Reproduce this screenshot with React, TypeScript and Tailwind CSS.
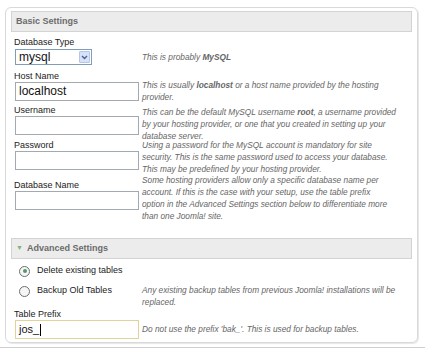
import React from 'react';

const descCls = "text-[8.3px] italic leading-[12px] text-[#666] whitespace-nowrap";
const labelCls = "text-[9px] leading-[12px] text-[#222]";
const inputCls = "ml-[1px] block h-[19px] w-[124px] border border-[#a3a9b1] bg-white px-[3px] text-[12px] leading-[17px] text-[#111]";

function Field({ label, value, className = '' }: { label: string; value?: string; className?: string }) {
  return (
    <div className={className}>
      <div className={labelCls}>{label}</div>
      <div className={inputCls}>{value}</div>
    </div>
  );
}

function Header({ title, toggle }: { title: string; toggle?: boolean }) {
  return (
    <div className="flex h-[21px] items-center gap-[4px] border border-[#d3d3d3] bg-[#ececec] px-[4px] text-[9px] font-bold text-[#6b6b6b]">
      {toggle && <span className="text-[7px] text-[#7bb47b]">▼</span>}
      <span>{title}</span>
    </div>
  );
}

function Radio({ checked, label }: { checked?: boolean; label: string }) {
  return (
    <div className="flex h-[20px] items-center gap-[7px] pl-[5px]">
      <span className="flex h-[11px] w-[11px] items-center justify-center rounded-full border border-[#6f6f6f] bg-[#f6f6f6]">
        {checked && <span className="h-[4px] w-[4px] rounded-full bg-[#4f9a6a]" />}
      </span>
      <span className="text-[9px] text-[#222]">{label}</span>
    </div>
  );
}

export default function App() {
  return (
    <div className="h-[351px] w-[425px] overflow-hidden bg-white font-['Liberation_Sans',Arial,sans-serif]">
      <div className="ml-[5px] mt-[7px] h-[336px] w-[413px] rounded-[6px] border border-[#d9d9d9] px-[5px] pt-[3px] shadow-[1px_1px_1px_#e6e6e6]">
        <Header title="Basic Settings" />

        <div className="pl-[3px] pt-[4px]">
          {/* Database Type */}
          <div className="flex h-[34px]">
            <div className="w-[128px]">
              <div className={labelCls}>Database Type</div>
              <div className="ml-[1px] mt-[1px] flex h-[16px] w-[77px] items-center border border-[#7f9db9] bg-white pl-[3px] text-[12px] text-[#111]">
                <span className="flex-1">mysql</span>
                <span className="mr-[1px] flex h-[12px] w-[11px] items-center justify-center rounded-[1px] border border-[#b5c6e8] bg-[#d6e2fb]">
                  <svg width="7" height="5" viewBox="0 0 7 5">
                    <path d="M1 1 L3.5 3.5 L6 1" fill="none" stroke="#4d6185" strokeWidth="1.4" />
                  </svg>
                </span>
              </div>
            </div>
            <div className={`${descCls} mt-[15px]`}>
              This is probably <b>MySQL</b>
            </div>
          </div>

          {/* Host Name */}
          <div className="flex h-[34px]">
            <Field className="w-[128px]" label="Host Name" value="localhost" />
            <div className={`${descCls} mt-[9px]`}>
              This is usually <b>localhost</b> or a host name provided by the hosting
              <br />
              provider.
            </div>
          </div>

          {/* Username */}
          <div className="flex h-[35px]">
            <Field className="w-[128px]" label="Username" />
            <div className={`${descCls} mt-[2px]`}>
              This can be the default MySQL username <b>root</b>, a username provided
              <br />
              by your hosting provider, or one that you created in setting up your
              <br />
              database server.
            </div>
          </div>

          {/* Password */}
          <div className="flex h-[35px]">
            <Field className="w-[128px]" label="Password" />
            <div className={descCls}>
              Using a password for the MySQL account is mandatory for site
              <br />
              security. This is the same password used to access your database.
              <br />
              This may be predefined by your hosting provider.
            </div>
          </div>

          {/* Database Name */}
          <div className="flex h-[48px]">
            <Field className="mt-[5px] w-[128px]" label="Database Name" />
            <div className={descCls}>
              Some hosting providers allow only a specific database name per
              <br />
              account. If this is the case with your setup, use the table prefix
              <br />
              option in the Advanced Settings section below to differentiate more
              <br />
              than one Joomla! site.
            </div>
          </div>
        </div>

        <div className="mt-[16px]">
          <Header title="Advanced Settings" toggle />
        </div>

        <div className="pl-[3px] pt-[2px]">
          <div className="flex">
            <div className="w-[128px]">
              <Radio checked label="Delete existing tables" />
              <Radio label="Backup Old Tables" />
            </div>
            <div className={`${descCls} mt-[23px]`}>
              Any existing backup tables from previous Joomla! installations will be
              <br />
              replaced.
            </div>
          </div>

          <div className="flex">
            <div className="w-[128px]">
              <div className={labelCls}>Table Prefix</div>
              <div className="ml-[1px] flex h-[19px] w-[124px] items-center border border-[#e2d39a] bg-white px-[3px] text-[11px] text-[#111]">
                jos_
                <span className="ml-[1px] h-[12px] w-[1px] bg-black" />
              </div>
            </div>
            <div className={`${descCls} mt-[15px]`}>
              Do not use the prefix 'bak_'. This is used for backup tables.
            </div>
          </div>
        </div>
      </div>
      <div className="mt-[4px] border-t border-[#cfcfcf]" />
    </div>
  );
}
